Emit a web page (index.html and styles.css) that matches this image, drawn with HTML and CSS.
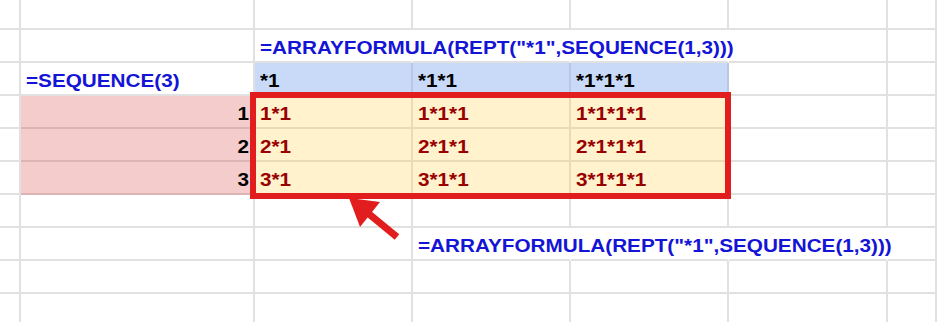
FILE: index.html
```html
<!DOCTYPE html>
<html>
<head>
<meta charset="utf-8">
<link rel="stylesheet" href="styles.css">
</head>
<body>
<div class="sheet">
  <div class="grid">
    <!-- row 0 -->
    <div class="c"></div><div class="c"></div><div class="c"></div><div class="c"></div><div class="c"></div><div class="c"></div><div class="c"></div>
    <!-- row 1 -->
    <div class="c"></div><div class="c"></div>
    <div class="c nob"><span class="t f">=ARRAYFORMULA(REPT("*1",SEQUENCE(1,3)))</span></div>
    <div class="c nob"></div><div class="c nob"></div><div class="c"></div><div class="c"></div>
    <!-- row 2 -->
    <div class="c"></div>
    <div class="c"><span class="t f">=SEQUENCE(3)</span></div>
    <div class="c blue"><span class="t">*1</span></div>
    <div class="c blue"><span class="t">*1*1</span></div>
    <div class="c blue"><span class="t">*1*1*1</span></div>
    <div class="c"></div><div class="c"></div>
    <!-- row 3 -->
    <div class="c"></div>
    <div class="c pink r"><span class="t">1</span></div>
    <div class="c yel"><span class="t dr">1*1</span></div>
    <div class="c yel"><span class="t dr">1*1*1</span></div>
    <div class="c yel"><span class="t dr">1*1*1*1</span></div>
    <div class="c"></div><div class="c"></div>
    <!-- row 4 -->
    <div class="c"></div>
    <div class="c pink r"><span class="t">2</span></div>
    <div class="c yel"><span class="t dr">2*1</span></div>
    <div class="c yel"><span class="t dr">2*1*1</span></div>
    <div class="c yel"><span class="t dr">2*1*1*1</span></div>
    <div class="c"></div><div class="c"></div>
    <!-- row 5 -->
    <div class="c"></div>
    <div class="c pink r"><span class="t">3</span></div>
    <div class="c yel"><span class="t dr">3*1</span></div>
    <div class="c yel"><span class="t dr">3*1*1</span></div>
    <div class="c yel"><span class="t dr">3*1*1*1</span></div>
    <div class="c"></div><div class="c"></div>
    <!-- row 6 -->
    <div class="c"></div><div class="c"></div><div class="c"></div><div class="c"></div><div class="c"></div><div class="c"></div><div class="c"></div>
    <!-- row 7 -->
    <div class="c"></div><div class="c"></div><div class="c"></div>
    <div class="c nob"><span class="t f">=ARRAYFORMULA(REPT("*1",SEQUENCE(1,3)))</span></div>
    <div class="c nob"></div><div class="c nob"></div><div class="c"></div>
    <!-- row 8 -->
    <div class="c"></div><div class="c"></div><div class="c"></div><div class="c"></div><div class="c"></div><div class="c"></div><div class="c"></div>
    <!-- row 9 -->
    <div class="c"></div><div class="c"></div><div class="c"></div><div class="c"></div><div class="c"></div><div class="c"></div><div class="c"></div>
  </div>
  <div class="highlight"></div>
  <svg class="arrow" width="937" height="322" viewBox="0 0 937 322">
    <line x1="369" y1="214" x2="397" y2="237" stroke="#e11d1d" stroke-width="7"/>
    <polygon points="349,198 380,202 360,227" fill="#e11d1d"/>
  </svg>
</div>
</body>
</html>
```
FILE: styles.css
```css
* { box-sizing: border-box; }
html, body {
  margin: 0;
  padding: 0;
  background: #ffffff;
  overflow: hidden;
}
.sheet {
  position: relative;
  width: 937px;
  height: 322px;
  overflow: hidden;
}
.grid {
  display: grid;
  grid-template-columns: 21px 234px 158px 158px 158px 159px 1fr;
  grid-template-rows: 30px repeat(9, 33px);
  font-family: "Liberation Sans", Arial, sans-serif;
  font-weight: bold;
  font-size: 18px;
  line-height: 20px;
  color: #000;
}
.c {
  border-right: 2px solid #e1e1e1;
  border-bottom: 2px solid #e1e1e1;
  display: flex;
  align-items: flex-end;
  padding: 0 4px 3px 5px;
  white-space: nowrap;
  overflow: visible;
  min-width: 0;
}
.c.nob { border-right-color: transparent; }
.c.r { justify-content: flex-end; }
.t {
  display: inline-block;
  transform: scaleX(1.15);
  transform-origin: left bottom;
  position: relative;
  z-index: 1;
}
.r .t { transform-origin: right bottom; }
.f { color: #1414d6; }
.dr { color: #990000; }
.blue {
  background: #c9daf8;
  border-right-color: #b9c8e2;
  border-bottom-color: #b9c8e2;
}
.pink {
  background: #f4cccc;
  border-right-color: #dcb4b4;
  border-bottom-color: #dcb4b4;
}
.yel {
  background: #fff2cc;
  border-right-color: #e8dbb6;
  border-bottom-color: #e8dbb6;
}
.highlight {
  position: absolute;
  left: 250px;
  top: 92px;
  width: 481px;
  height: 107px;
  border: 6px solid #e11d1d;
  pointer-events: none;
}
.arrow {
  position: absolute;
  left: 0;
  top: 0;
  pointer-events: none;
}
```
